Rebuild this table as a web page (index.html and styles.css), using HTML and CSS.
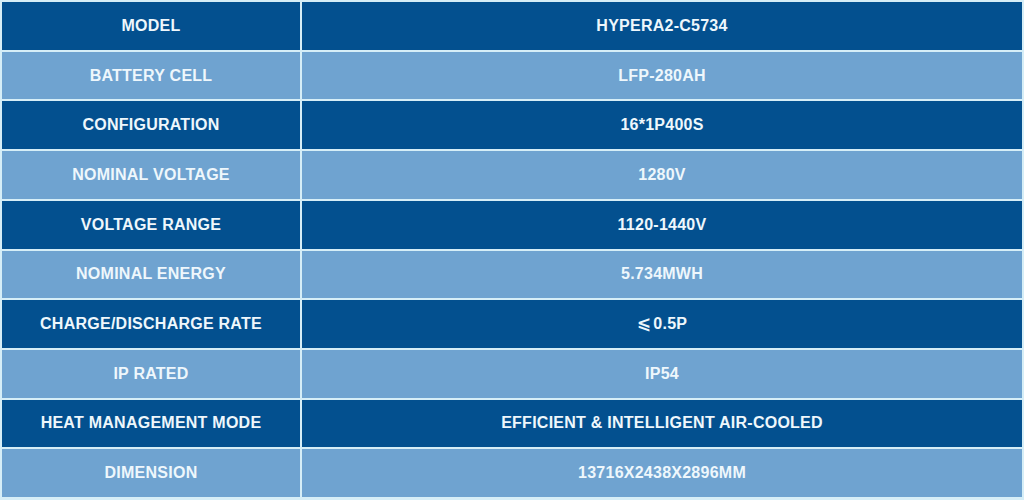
FILE: index.html
```html
<!DOCTYPE html>
<html>
<head>
<meta charset="utf-8">
<link rel="stylesheet" href="styles.css">
</head>
<body>
<div class="spec">
  <div class="cell dark">MODEL</div><div class="cell dark">HYPERA2-C5734</div>
  <div class="cell light">BATTERY CELL</div><div class="cell light">LFP-280AH</div>
  <div class="cell dark">CONFIGURATION</div><div class="cell dark">16*1P400S</div>
  <div class="cell light">NOMINAL VOLTAGE</div><div class="cell light">1280V</div>
  <div class="cell dark">VOLTAGE RANGE</div><div class="cell dark">1120-1440V</div>
  <div class="cell light">NOMINAL ENERGY</div><div class="cell light">5.734MWH</div>
  <div class="cell dark">CHARGE/DISCHARGE RATE</div><div class="cell dark"><span class="le">⩽</span>0.5P</div>
  <div class="cell light">IP RATED</div><div class="cell light">IP54</div>
  <div class="cell dark">HEAT MANAGEMENT MODE</div><div class="cell dark">EFFICIENT &amp; INTELLIGENT AIR-COOLED</div>
  <div class="cell light">DIMENSION</div><div class="cell light">13716X2438X2896MM</div>
</div>
</body>
</html>
```

FILE: styles.css
```css
html, body {
  margin: 0;
  padding: 0;
  background: #d6eef7;
}
.spec {
  box-sizing: border-box;
  width: 1024px;
  height: 500px;
  padding: 2px 2px 3px 2px;
  display: grid;
  grid-template-columns: 298px 1fr;
  grid-template-rows: repeat(10, 1fr);
  gap: 2px;
  background: #d6eef7;
  font-family: "Liberation Sans", Arial, sans-serif;
  font-weight: bold;
  font-size: 16px;
  letter-spacing: 0.25px;
  color: #eef7fc;
}
.cell {
  display: flex;
  align-items: center;
  justify-content: center;
}
.le {
  font-family: "DejaVu Sans", sans-serif;
  font-size: 17px;
  font-weight: bold;
  margin-right: 2px;
  position: relative;
  top: -1px;
}
.dark {
  background: #03508f;
}
.light {
  background: #6fa3d0;
}
```
